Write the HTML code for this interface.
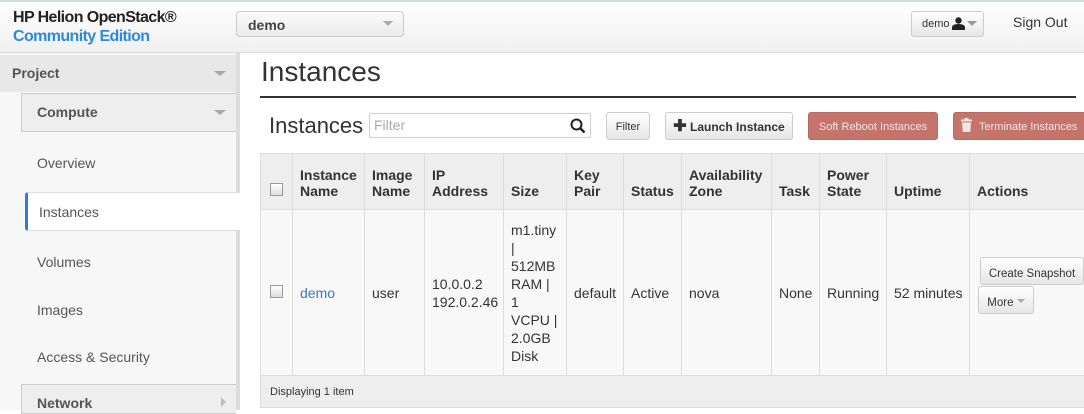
<!DOCTYPE html>
<html><head><meta charset="utf-8"><style>
*{box-sizing:border-box;margin:0;padding:0}
body{width:1084px;height:410px;overflow:hidden;background:#fff;font-family:"Liberation Sans",sans-serif;position:relative;color:#333}
.a{position:absolute}
.hdr{left:0;top:0;width:1084px;height:53px;background:linear-gradient(#fff,#f0f0f0);border-top:2px solid #d4dbe3;border-bottom:1px solid #ddd}
.btn{position:absolute;border:1px solid #ccc;border-radius:3px;background:linear-gradient(#fff,#e6e6e6);font-size:11px;color:#333;text-align:center;white-space:nowrap}
.side{left:0;top:53px;width:240px;height:357px;background:#f7f7f7;border-right:4px solid #ddd}
.nav{position:absolute;left:37px;font-size:14px;color:#555}
table{border-collapse:collapse;font-size:14px;table-layout:fixed}
td,th{border:1px solid #ddd;padding:0 7px;text-align:left;overflow:hidden}
th{background:#eee;font-weight:bold;vertical-align:bottom;padding-bottom:10px}
td{background:#f8f8f8;vertical-align:middle}
.cb{display:inline-block;width:13px;height:13px;border:1px solid #999;background:linear-gradient(#fff,#ddd)}
</style></head><body>
<div class="a hdr"></div>
<div class="a" style="left:13px;top:9px;font-weight:bold;font-size:16px;color:#222;letter-spacing:-0.6px">HP Helion OpenStack®</div>
<div class="a" style="left:13px;top:28px;font-weight:bold;font-size:16px;color:#2c8ad8;letter-spacing:-0.6px">Community Edition</div>
<div class="a" style="left:236px;top:11px;width:168px;height:26px;border:1px solid #ccc;border-radius:4px;background:linear-gradient(#fafafa,#ececec)"></div>
<div class="a" style="left:248px;top:17px;font-size:14px;font-weight:bold;color:#444">demo</div>
<div class="a" style="left:383px;top:21px;border:5px solid transparent;border-top:5px solid #aaa"></div>
<div class="btn" style="left:911px;top:11px;width:73px;height:26px"></div>
<div class="a" style="left:922px;top:18px;font-size:11px">demo</div>
<svg class="a" style="left:952px;top:17px" width="13" height="13" viewBox="0 0 13 13"><circle cx="6.5" cy="3.5" r="3.2" fill="#222"/><path d="M0 13v-2.5c0-2 2-3.5 6.5-3.5s6.5 1.5 6.5 3.5V13z" fill="#222"/></svg>
<div class="a" style="left:967px;top:21px;border:5px solid transparent;border-top:5px solid #999"></div>
<div class="a" style="left:1013px;top:14px;font-size:14px;color:#333">Sign Out</div>

<div class="a side"></div>
<div class="a" style="left:0;top:55px;width:236px;height:37px;background:#e8e8e8"></div>
<div class="a" style="left:12px;top:65px;font-size:14px;font-weight:bold;color:#555">Project</div>
<div class="a" style="left:214px;top:71px;border:6px solid transparent;border-top:5px solid #aaa"></div>
<div class="a" style="left:21px;top:93px;width:215px;height:39px;background:#eee;border:1px solid #ccc;border-right:0"></div>
<div class="a" style="left:37px;top:104px;font-size:14px;font-weight:bold;color:#555">Compute</div>
<div class="a" style="left:214px;top:110px;border:6px solid transparent;border-top:5px solid #aaa"></div>
<div class="nav" style="top:155px">Overview</div>
<div class="a" style="left:25px;top:192px;width:215px;height:39px;background:#fff;border-left:3px solid #2e7fd0;border-radius:3px 0 0 3px;border-top:1px solid #ddd;border-bottom:1px solid #ddd"></div>
<div class="nav" style="top:204px;left:39px">Instances</div>
<div class="nav" style="top:254px">Volumes</div>
<div class="nav" style="top:302px">Images</div>
<div class="nav" style="top:349px">Access &amp; Security</div>
<div class="a" style="left:21px;top:384px;width:215px;height:30px;background:#eee;border:1px solid #ccc;border-right:0"></div>
<div class="a" style="left:37px;top:395px;font-size:14px;font-weight:bold;color:#555">Network</div>
<div class="a" style="left:221px;top:397px;border:5px solid transparent;border-left:5px solid #bbb"></div>

<div class="a" style="left:261px;top:56px;font-size:28px;color:#333">Instances</div>
<div class="a" style="left:260px;top:96px;width:816px;height:2px;background:#333"></div>
<div class="a" style="left:269px;top:113px;font-size:22px;color:#333">Instances</div>
<div class="a" style="left:369px;top:113px;width:222px;height:25px;border:1px solid #ccc;border-radius:2px;background:#fff;font-size:14px;color:#aaa;padding:3px 4px">Filter</div>
<svg class="a" style="left:570px;top:118px" width="16" height="16" viewBox="0 0 16 16"><circle cx="6.5" cy="6.5" r="5" fill="none" stroke="#222" stroke-width="2"/><path d="M10 10l4.5 4.5" stroke="#222" stroke-width="2.5"/></svg>
<div class="btn" style="left:606px;top:112px;width:44px;height:28px;padding-top:8px">Filter</div>
<div class="btn" style="left:665px;top:112px;width:128px;height:28px;padding-top:7px;font-weight:bold;font-size:12px"><span style="font-size:16px;line-height:10px">✚</span> Launch Instance</div>
<div class="btn" style="left:808px;top:112px;width:130px;height:28px;padding-top:8px;background:#c5746c;border-color:#b86a62;color:#f4e4e2">Soft Reboot Instances</div>
<div class="btn" style="left:953px;top:112px;width:140px;height:28px;padding-top:8px;background:#c5746c;border-color:#b86a62;color:#f4e4e2;text-align:left;padding-left:25px">Terminate Instances</div>
<svg class="a" style="left:961px;top:118px" width="11" height="14" viewBox="0 0 11 14"><rect x="0" y="1.5" width="11" height="2" fill="#f4e4e2"/><rect x="3.5" y="0" width="4" height="2" fill="#f4e4e2"/><path d="M1 4.5h9l-.7 9.5H1.7z" fill="#f4e4e2"/></svg>

<table class="a" style="left:260px;top:153px;width:824px">
<colgroup><col style="width:32px"><col style="width:72px"><col style="width:60px"><col style="width:79px"><col style="width:63px"><col style="width:57px"><col style="width:58px"><col style="width:90px"><col style="width:48px"><col style="width:67px"><col style="width:83px"><col style="width:115px"></colgroup>
<tr style="height:56px">
<th style="padding-left:9px"><span class="cb"></span></th>
<th>Instance<br>Name</th><th>Image<br>Name</th><th>IP<br>Address</th><th>Size</th><th>Key<br>Pair</th><th>Status</th><th>Availability<br>Zone</th><th>Task</th><th>Power<br>State</th><th>Uptime</th><th>Actions</th></tr>
<tr style="height:166px;line-height:18px">
<td style="padding-left:9px"><span class="cb"></span></td>
<td style="color:#3b78c2">demo</td><td>user</td><td>10.0.0.2<br>192.0.2.46</td><td>m1.tiny<br>|<br>512MB<br>RAM |<br>1<br>VCPU |<br>2.0GB<br>Disk</td><td>default</td><td>Active</td><td>nova</td><td>None</td><td>Running</td><td style="white-space:nowrap">52 minutes</td>
<td style="padding:0 0 0 8px;position:relative"><div style="position:relative;top:-8px"><div class="btn" style="position:relative;left:2px;top:0;width:104px;height:28px;padding-top:7px;font-size:11.5px">Create Snapshot</div><div class="btn" style="position:relative;left:0;top:1px;width:56px;height:28px;padding-top:7px;font-size:11.5px">More <span style="display:inline-block;border:4px solid transparent;border-top:4px solid #aaa;vertical-align:-1px"></span></div></div></td></tr>
<tr style="height:32px"><td colspan="12" style="background:#eee;font-size:11px;padding-left:9px">Displaying 1 item</td></tr>
</table>
</body></html>
